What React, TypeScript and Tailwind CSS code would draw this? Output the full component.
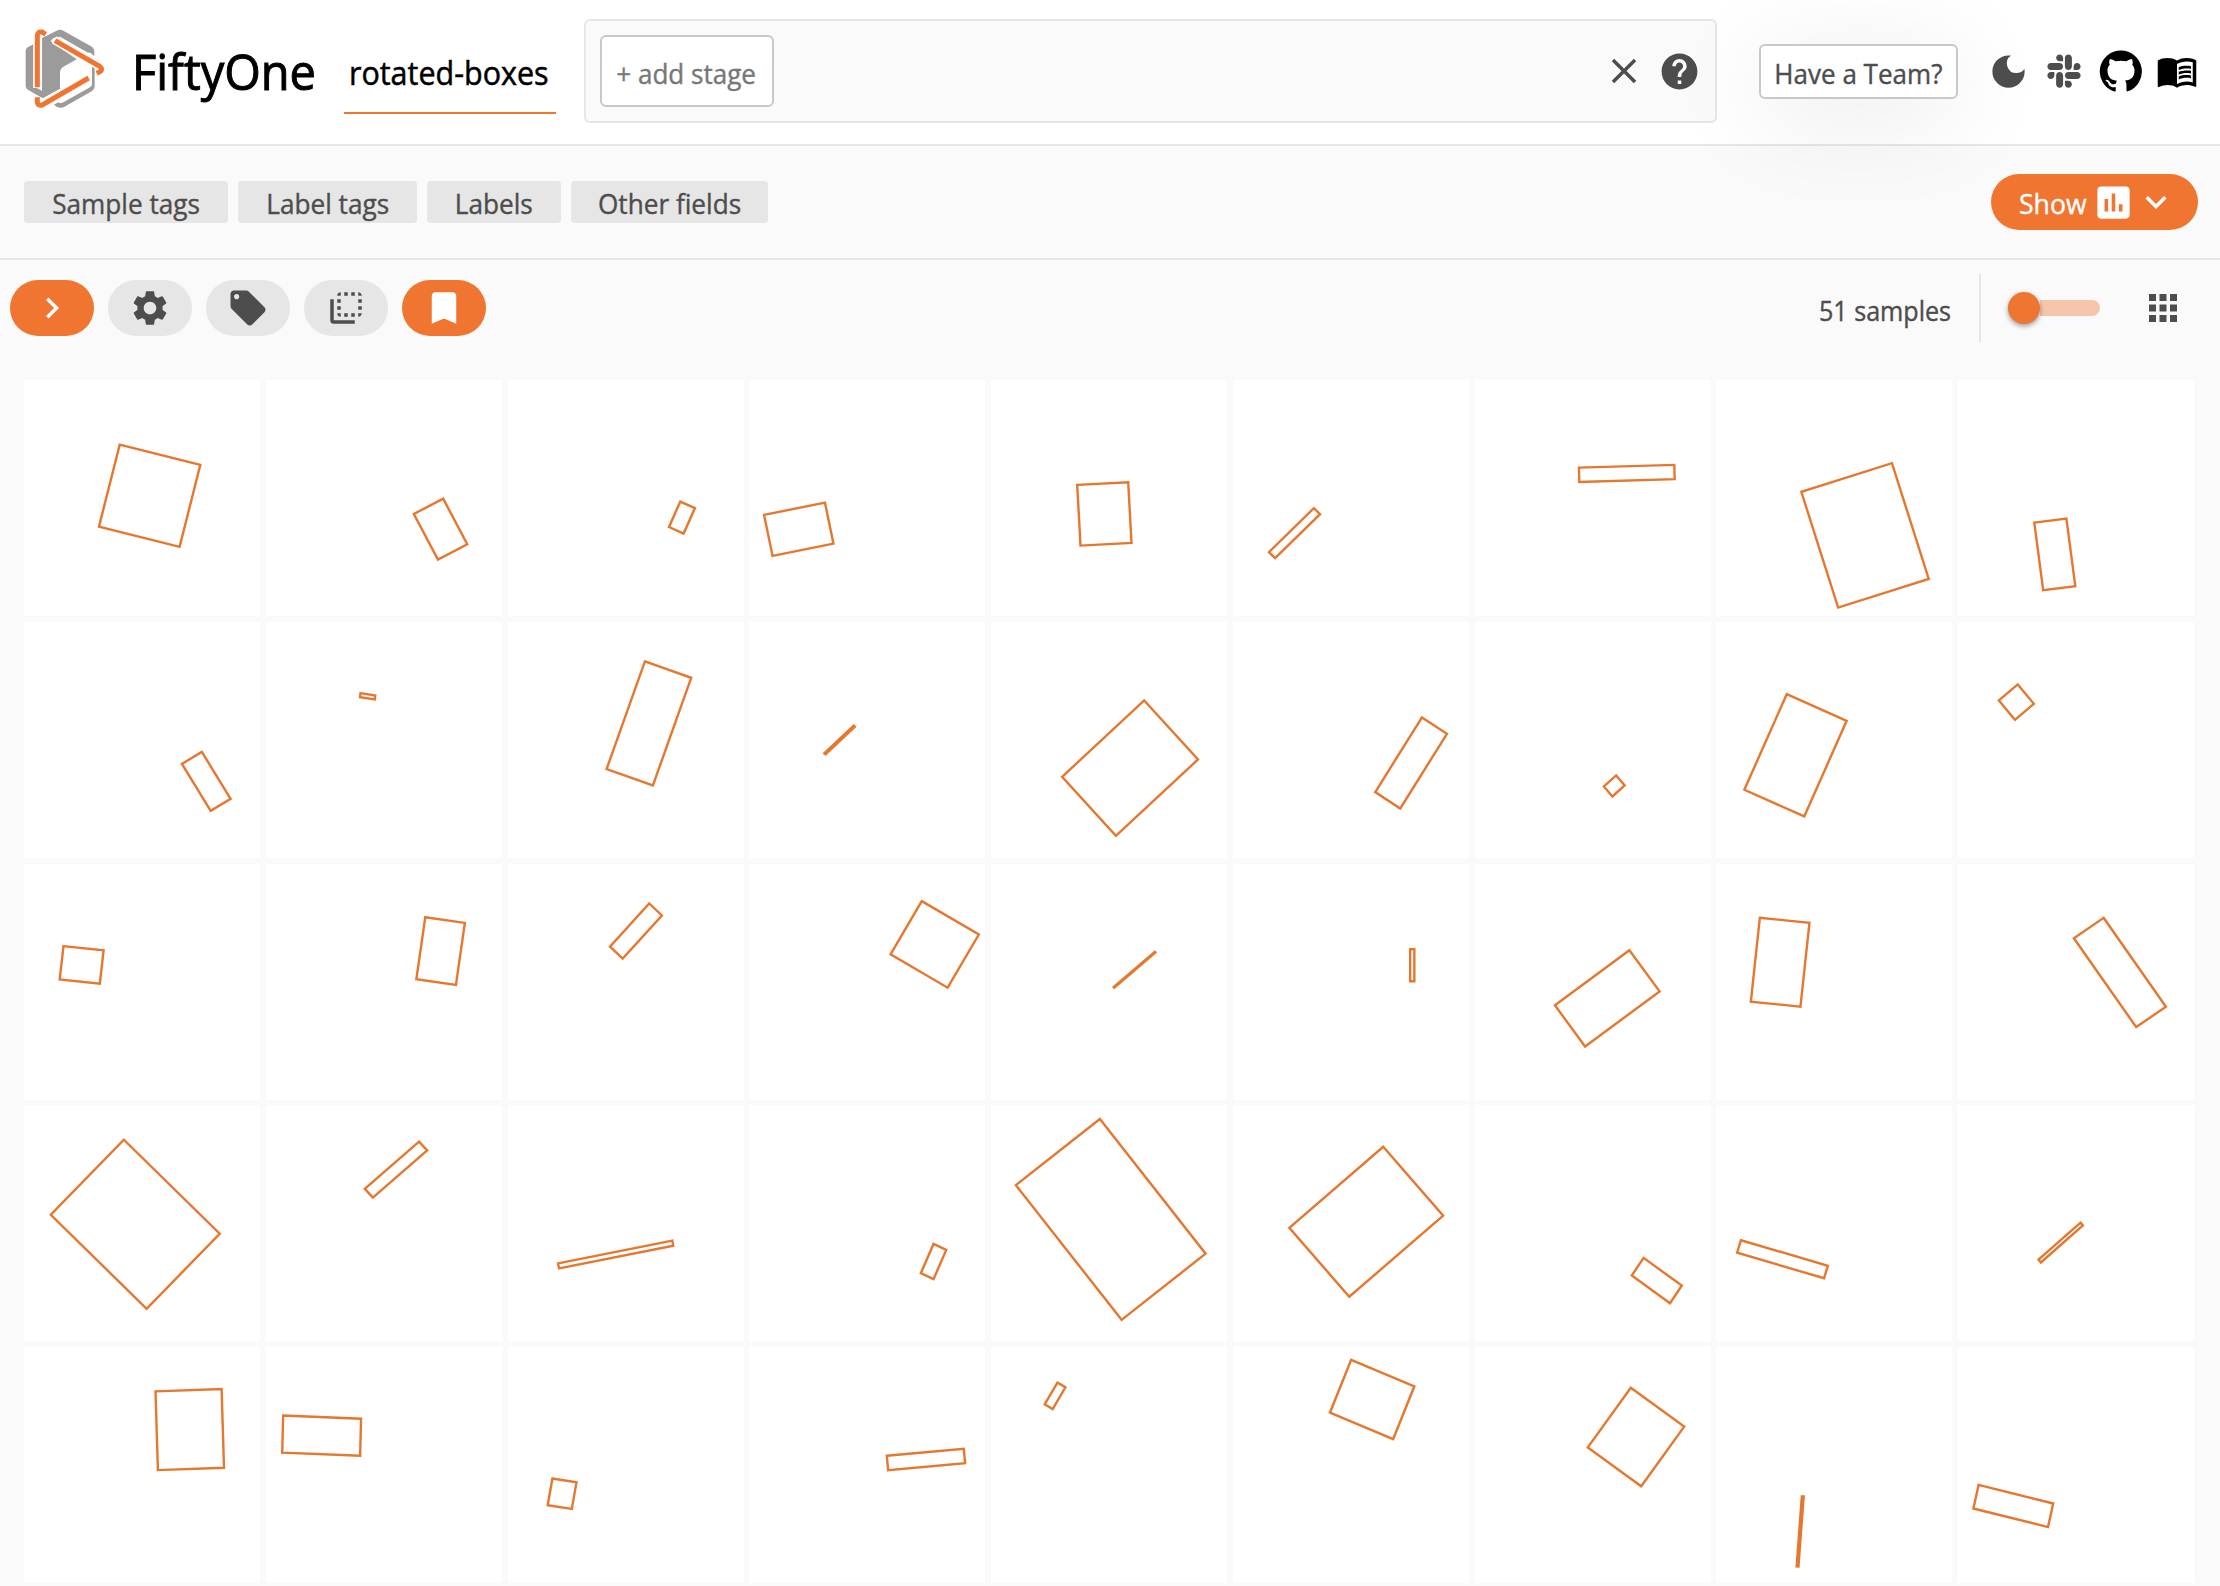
import React from "react";
import {
  MdApps,
  MdAssessment,
  MdBookmark,
  MdClose,
  MdDarkMode,
  MdFlipToBack,
  MdHelp,
  MdKeyboardArrowDown,
  MdKeyboardArrowRight,
  MdLocalOffer,
  MdMenuBook,
  MdSettings,
} from "react-icons/md";
import { FaSlack } from "react-icons/fa";

const TILE = 236;
const PITCH = 241.75;
const ORIGIN_X = 24.2;
const ORIGIN_Y = 380.1;

// Three consecutive corners of each rotated box; the fourth is derived.
type Box = [number, number, number, number, number, number];

const rows: Box[][] = [
  [
    [119.9, 444.7, 200.5, 465, 179.8, 547],
    [443.1, 498.7, 467.2, 544.3, 437.9, 559.7],
    [680, 501.7, 694.6, 508.3, 683.3, 533.7],
    [825.4, 502.7, 833.9, 543.7, 773, 556],
    [1077.4, 485, 1128.4, 482.3, 1131.7, 543],
    [1313.8, 508.3, 1320, 514.3, 1275.1, 558.3],
    [1578.6, 467.7, 1674, 465, 1674.4, 479.3],
    [1892.4, 463.3, 1929.2, 579, 1838.6, 607.7],
    [2034.5, 522.7, 2066.6, 518.7, 2075.5, 586.3],
  ],
  [
    [202, 751.7, 230.8, 798.7, 210.9, 810.7],
    [360.5, 693, 375.2, 695.3, 374.7, 699.3],
    [644.6, 661.3, 690.9, 677.7, 652.6, 785.3],
    [854.1, 725.4, 855.3, 726.6, 826, 754.3],
    [1144.4, 700.3, 1198.2, 759.3, 1116.1, 835.7],
    [1421.9, 717.3, 1446.9, 733.7, 1400.2, 808.3],
    [1615.9, 775.3, 1624.4, 785.3, 1612.1, 796.3],
    [1787.2, 694, 1847.1, 720.7, 1804.7, 816.3],
    [2018, 684.3, 2034, 703.7, 2015.1, 719.7],
  ],
  [
    [63.7, 945.7, 103.8, 949.8, 100, 983.2],
    [425.2, 916.9, 464.8, 922.5, 455.9, 984.5],
    [648.9, 903.1, 661.6, 915.1, 622.4, 958.2],
    [922.2, 900.7, 979.3, 934.1, 948.1, 987.3],
    [1155, 951.4, 1155.6, 952, 1114.5, 987.2],
    [1410.1, 948.9, 1414.3, 948.9, 1414.3, 980.8],
    [1629.1, 949.8, 1659.3, 991, 1584.8, 1046.1],
    [1760.3, 917.4, 1809.9, 922.5, 1800.9, 1006.3],
    [2103.8, 917.4, 2166.1, 1006.3, 2136.4, 1026.7],
  ],
  [
    [124.1, 1140.1, 219.9, 1234.1, 146.8, 1309.1],
    [419, 1142, 427.1, 1150.8, 372.8, 1198],
    [557.8, 1263.7, 672, 1241, 672.9, 1246.1],
    [934, 1244.3, 946.7, 1250.3, 934, 1279.5],
    [1100.1, 1119.3, 1205.8, 1254, 1121.8, 1320.2],
    [1383.2, 1147.1, 1443.1, 1216, 1349.2, 1297.1],
    [1643.3, 1258.2, 1681.5, 1286, 1669.7, 1303.6],
    [1741.4, 1240.6, 1828.3, 1266.1, 1824.5, 1278.6],
    [2080.7, 1223, 2083.1, 1225.8, 2041.1, 1262.8],
  ],
  [
    [155.7, 1391.5, 221.8, 1389.2, 224.2, 1467.9],
    [283.1, 1415.6, 361, 1418.8, 360.1, 1455.9],
    [552.1, 1478.6, 576.2, 1482.3, 571.5, 1509.1],
    [887.2, 1455.9, 964.2, 1448.9, 965.6, 1463.3],
    [1057.6, 1382.7, 1065.6, 1387.4, 1052.9, 1409.1],
    [1351.1, 1360, 1414.3, 1386.4, 1393.1, 1439.2],
    [1630.5, 1387.8, 1683.9, 1426.7, 1640.9, 1486.4],
    [1802.3, 1496.5, 1804.1, 1496.6, 1798.9, 1566.6],
    [1978.8, 1485, 2053.4, 1503.6, 2048.2, 1527.2],
  ],
];

function Tile({ box, row, col }: { box: Box; row: number; col: number }) {
  const [ax, ay, bx, by, cx, cy] = box;
  const x0 = ORIGIN_X + col * PITCH;
  const y0 = ORIGIN_Y + row * PITCH;
  const points = `${ax},${ay} ${bx},${by} ${cx},${cy} ${ax + cx - bx},${ay + cy - by}`;
  return (
    <svg className="block h-[236px] w-[236px] bg-white" viewBox={`${x0} ${y0} ${TILE} ${TILE}`}>
      <polygon points={points} fill="none" stroke="#e5772e" strokeWidth="2.4" />
    </svg>
  );
}

function Logo() {
  return (
    <svg className="block h-[110px] w-[110px]" viewBox="0 0 330 330">
      <path
        fill="#9b9b9b"
        d="M96 84 L140 62 Q150 57 160 62 L243 109 Q253 115 253 126 V138 L246 133 Q244 127 234 128 L150 80 L130 84 L122 94 L200 148 L160 170 Q150 176 150 188 V238 L101 266 L56 241 Q47 236 47 225 V124 Q47 114 56 110 L73 101 V230 L96 242 Z"
      />
      <path
        fill="#9b9b9b"
        d="M246 170 L254 175 V228 Q254 238 245 244 L162 291 Q151 296 140 290 L132 284 L144 277 Q151 282 160 277 L240 232 Q246 229 246 222 Z"
      />
      <path fill="none" stroke="#fff" strokeWidth="25" d="M82 234 V92 M132 90 L262 165 M100 278 L237 203" />
      <path fill="none" stroke="#f07530" strokeWidth="15" d="M82 232 V78 Q83 64 96 66 L107 73" />
      <path fill="none" stroke="#f07530" strokeWidth="15" d="M135 92 L269 169 Q280 178 270 185 L260 190" />
      <path fill="none" stroke="#f07530" strokeWidth="15" d="M82 262 V277 Q85 290 98 284 L236 204" />
    </svg>
  );
}

function GitHubIcon({ className }: { className: string }) {
  return (
    <svg className={className} viewBox="0 0 24 24" fill="currentColor">
      <path d="M12 1.27a11 11 0 00-3.48 21.46c.55.09.73-.28.73-.55v-1.84c-3.03.64-3.67-1.46-3.67-1.46-.55-1.29-1.28-1.65-1.28-1.65-.92-.65.1-.65.1-.65 1.1 0 1.73 1.1 1.73 1.1.92 1.65 2.57 1.2 3.21.92a2 2 0 01.64-1.47c-2.47-.27-5.04-1.19-5.04-5.5 0-1.1.46-2.1 1.2-2.84a3.76 3.76 0 010-2.93s.91-.28 3.11 1.1c1.8-.49 3.7-.49 5.5 0 2.1-1.38 3.02-1.1 3.02-1.1a3.76 3.76 0 01.1 2.83c.74.74 1.2 1.74 1.2 2.94 0 4.21-2.57 5.13-5.04 5.4.45.37.82.92.82 2.02v3.03c0 .27.1.64.73.55A11 11 0 0012 1.27" />
    </svg>
  );
}

// Slightly narrowed text, used for every caption in the interface.
function Label({ children, className }: { children: React.ReactNode; className: string }) {
  return <span className={`block whitespace-nowrap leading-none ${className}`}>{children}</span>;
}

function Tag({ children, className }: { children: React.ReactNode; className: string }) {
  return (
    <div className={`flex h-[42px] items-center justify-center rounded-[4px] bg-[#e6e6e6] text-[#4d4d4d] ${className}`}>
      <Label className="mt-[1px] scale-x-[0.935] text-[28px] [-webkit-text-stroke:0.4px]">{children}</Label>
    </div>
  );
}

function Pill({ children, active }: { children: React.ReactNode; active?: boolean }) {
  return (
    <div
      className={`flex h-14 w-21 items-center justify-center rounded-full ${
        active ? "bg-[#f07530] text-white" : "bg-[#e6e6e6] text-[#4d4d4d]"
      }`}
    >
      {children}
    </div>
  );
}

export default function App() {
  return (
    <div className="h-[1586px] w-[2220px] overflow-hidden bg-[#fafafa] font-['Open_Sans',sans-serif]">
      <header className="flex h-[146px] items-start border-b-2 border-[#e6e6e6] bg-white">
        <div className="ml-[10px] mt-[10px] w-[110px]">
          <Logo />
        </div>
        <div className="ml-[12px] mt-[46px] w-[212px]">
          <Label className="origin-left scale-x-[0.94] text-[50px] text-black [-webkit-text-stroke:1px]">FiftyOne</Label>
        </div>
        <div className="flex h-[114px] w-[212px] justify-center border-b-2 border-[#f07530] pr-[2px] pt-[57px]">
          <Label className="scale-x-[0.953] text-[32px] text-black [-webkit-text-stroke:0.5px]">rotated-boxes</Label>
        </div>
        <div className="ml-7 mt-[19px] flex h-[104px] w-[1133px] items-center rounded-[6px] border-2 border-[#e6e6e6] bg-[#fafafa] pl-[14px]">
          <div className="flex h-[72px] w-[174px] items-center justify-center rounded-[6px] border-2 border-[#c8c8c8] bg-white pr-[2px] text-[#777]">
            <Label className="mt-[3px] scale-x-[0.93] text-[28px] [-webkit-text-stroke:0.4px]">+ add stage</Label>
          </div>
          <MdClose className="ml-auto size-[42px] text-[#4d4d4d]" />
          <MdHelp className="ml-[13px] mr-[14px] size-[43px] text-[#4d4d4d]" />
        </div>
        <div className="relative z-10 ml-[42px] mt-[44px] flex h-[55px] w-[199px] items-center justify-center rounded-[6px] border-2 border-[#c8c8c8] bg-white text-[#4d4d4d] shadow-[0_16px_100px_rgba(0,0,0,0.1)]">
          <Label className="mt-[2px] scale-x-[0.93] text-[28px] [-webkit-text-stroke:0.4px]">Have a Team?</Label>
        </div>
        <div className="relative z-10 ml-[29px] mt-[50px] flex h-[42px] items-center text-[#4d4d4d]">
          <MdDarkMode className="size-[43px]" />
          <FaSlack className="ml-[15px] size-[38px]" />
          <GitHubIcon className="ml-[15px] size-[46px] text-black" />
          <MdMenuBook className="ml-[12px] size-[42px] text-black" />
        </div>
      </header>

      <div className="flex h-[114px] items-center gap-[10px] border-b-2 border-[#e6e6e6] pl-6 pr-[22px]">
        <Tag className="w-[204px]">Sample tags</Tag>
        <Tag className="w-[179px]">Label tags</Tag>
        <Tag className="w-[134px]">Labels</Tag>
        <Tag className="w-[197px]">Other fields</Tag>
        <div className="ml-auto flex h-14 w-[207px] items-center rounded-full bg-[#f07530] pl-[28px] text-white">
          <div className="w-[67px]">
            <Label className="mt-[2px] origin-left scale-x-[0.95] text-[28px] [-webkit-text-stroke:0.4px]">Show</Label>
          </div>
          <MdAssessment className="ml-[6px] size-[43px]" />
          <MdKeyboardArrowDown className="size-[42px]" />
        </div>
      </div>

      <div className="flex h-[96px] items-center pl-[10px]">
        <div className="flex gap-[14px]">
          <Pill active>
            <MdKeyboardArrowRight className="size-[42px]" />
          </Pill>
          <Pill>
            <MdSettings className="size-[42px]" />
          </Pill>
          <Pill>
            <MdLocalOffer className="size-[42px]" />
          </Pill>
          <Pill>
            <MdFlipToBack className="size-[42px]" />
          </Pill>
          <Pill active>
            <MdBookmark className="size-[42px]" />
          </Pill>
        </div>
        <div className="ml-auto w-[132px] text-[#4d4d4d]">
          <Label className="mt-[3px] origin-left scale-x-[0.896] text-[28px] [-webkit-text-stroke:0.4px]">51 samples</Label>
        </div>
        <div className="ml-[28px] h-[68px] w-[2px] bg-[#e6e6e6]" />
        <div className="ml-[27px] flex w-[92px] items-center">
          <div className="relative size-8 rounded-full bg-[#f07530] shadow-[0_2px_5px_rgba(0,0,0,0.4)]" />
          <div className="h-4 w-[60px] rounded-r-full bg-[#f5c6ab]" />
        </div>
        <MdApps className="ml-[42px] mr-[36px] size-[42px] text-[#4d4d4d]" />
      </div>

      <main className="mt-[24px] grid grid-cols-[repeat(9,236px)] gap-[5.75px] pl-6">
        {rows.flatMap((boxes, row) =>
          boxes.map((box, col) => <Tile key={`${row}-${col}`} box={box} row={row} col={col} />),
        )}
      </main>
    </div>
  );
}
